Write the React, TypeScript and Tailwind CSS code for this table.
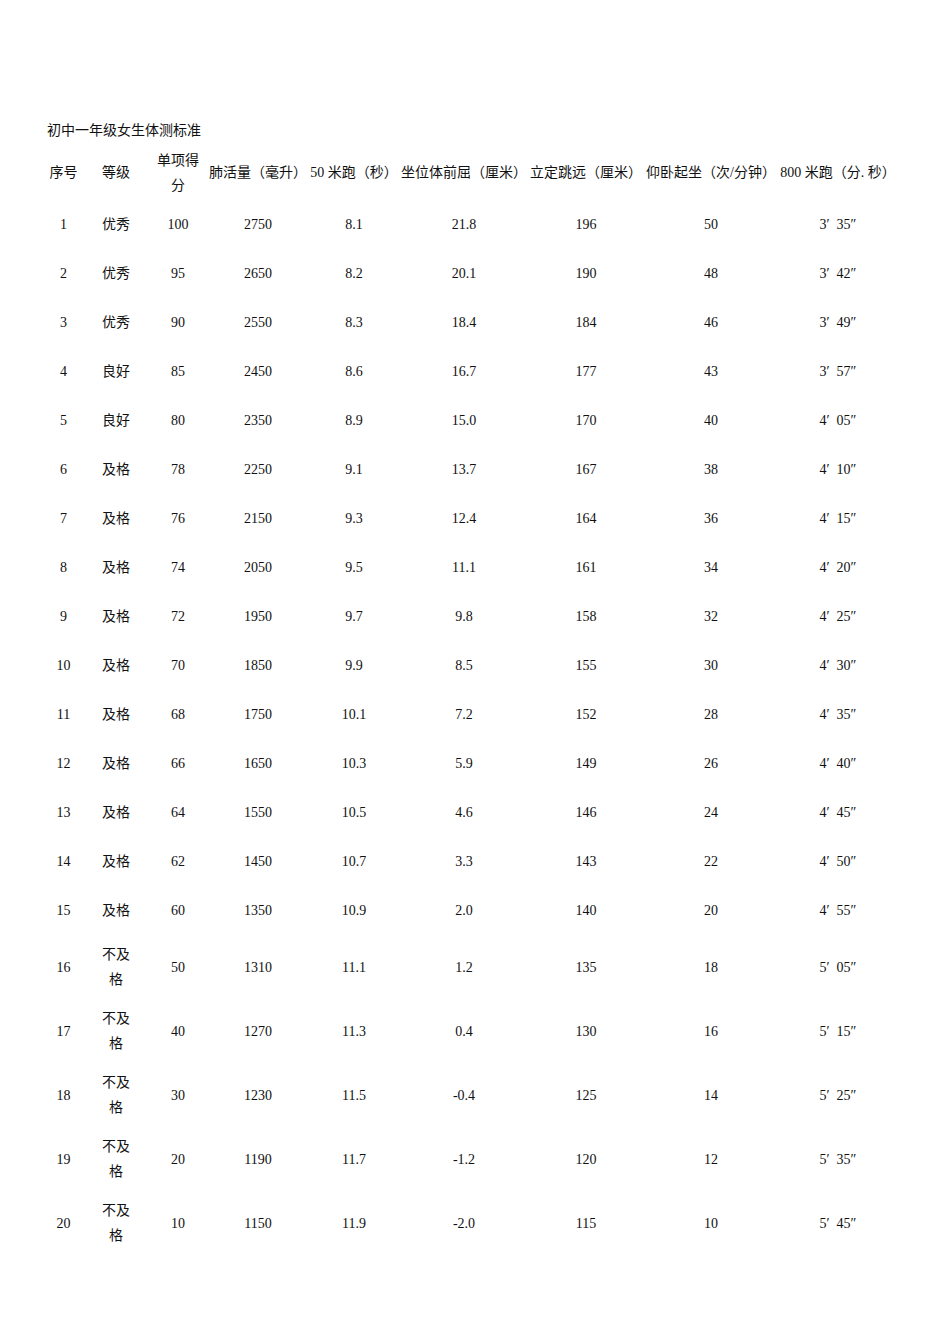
const rows: [number, string, number, number, string, string, number, number, string][] = [
  [1, '优秀', 100, 2750, '8.1', '21.8', 196, 50, '3′ 35″'],
  [2, '优秀', 95, 2650, '8.2', '20.1', 190, 48, '3′ 42″'],
  [3, '优秀', 90, 2550, '8.3', '18.4', 184, 46, '3′ 49″'],
  [4, '良好', 85, 2450, '8.6', '16.7', 177, 43, '3′ 57″'],
  [5, '良好', 80, 2350, '8.9', '15.0', 170, 40, '4′ 05″'],
  [6, '及格', 78, 2250, '9.1', '13.7', 167, 38, '4′ 10″'],
  [7, '及格', 76, 2150, '9.3', '12.4', 164, 36, '4′ 15″'],
  [8, '及格', 74, 2050, '9.5', '11.1', 161, 34, '4′ 20″'],
  [9, '及格', 72, 1950, '9.7', '9.8', 158, 32, '4′ 25″'],
  [10, '及格', 70, 1850, '9.9', '8.5', 155, 30, '4′ 30″'],
  [11, '及格', 68, 1750, '10.1', '7.2', 152, 28, '4′ 35″'],
  [12, '及格', 66, 1650, '10.3', '5.9', 149, 26, '4′ 40″'],
  [13, '及格', 64, 1550, '10.5', '4.6', 146, 24, '4′ 45″'],
  [14, '及格', 62, 1450, '10.7', '3.3', 143, 22, '4′ 50″'],
  [15, '及格', 60, 1350, '10.9', '2.0', 140, 20, '4′ 55″'],
  [16, '不及格', 50, 1310, '11.1', '1.2', 135, 18, '5′ 05″'],
  [17, '不及格', 40, 1270, '11.3', '0.4', 130, 16, '5′ 15″'],
  [18, '不及格', 30, 1230, '11.5', '-0.4', 125, 14, '5′ 25″'],
  [19, '不及格', 20, 1190, '11.7', '-1.2', 120, 12, '5′ 35″'],
  [20, '不及格', 10, 1150, '11.9', '-2.0', 115, 10, '5′ 45″'],
];

const headers = [
  '序号',
  '等级',
  '单项得分',
  '肺活量（毫升）',
  '50 米跑（秒）',
  '坐位体前屈（厘米）',
  '立定跳远（厘米）',
  '仰卧起坐（次/分钟）',
  '800 米跑（分. 秒）',
];

const gridCols = 'grid grid-cols-[47px_58px_66px_94px_98px_122px_122px_128px_126px]';

function Cell({ children }: { children: React.ReactNode }) {
  return <div className="flex items-center justify-center whitespace-nowrap">{children}</div>;
}

export default function App() {
  return (
    <div
      className="min-h-[1344px] w-[950px] bg-white pl-[40px] pt-[118px] text-[14px] leading-[25px] text-[#111]"
      style={{ fontFamily: '"Liberation Serif", "Noto Sans CJK SC", serif' }}
    >
      <div className="pl-[7px]">初中一年级女生体测标准</div>

      <div className={`${gridCols} mt-[2px] h-[55px]`}>
        {headers.map((h, i) => (
          <Cell key={h}>
            {i === 2 ? (
              <div className="w-[44px] whitespace-normal text-center">{h}</div>
            ) : (
              h
            )}
          </Cell>
        ))}
      </div>

      {rows.map((r) => (
        <div key={r[0]} className={`${gridCols} min-h-[49px] py-[7px]`}>
          <Cell>{r[0]}</Cell>
          <Cell>
            <div className="w-[30px] whitespace-normal text-center">{r[1]}</div>
          </Cell>
          <Cell>{r[2]}</Cell>
          <Cell>{r[3]}</Cell>
          <Cell>{r[4]}</Cell>
          <Cell>{r[5]}</Cell>
          <Cell>{r[6]}</Cell>
          <Cell>{r[7]}</Cell>
          <Cell>
            <span className="whitespace-pre">{r[8].replace(' ', '  ')}</span>
          </Cell>
        </div>
      ))}
    </div>
  );
}
